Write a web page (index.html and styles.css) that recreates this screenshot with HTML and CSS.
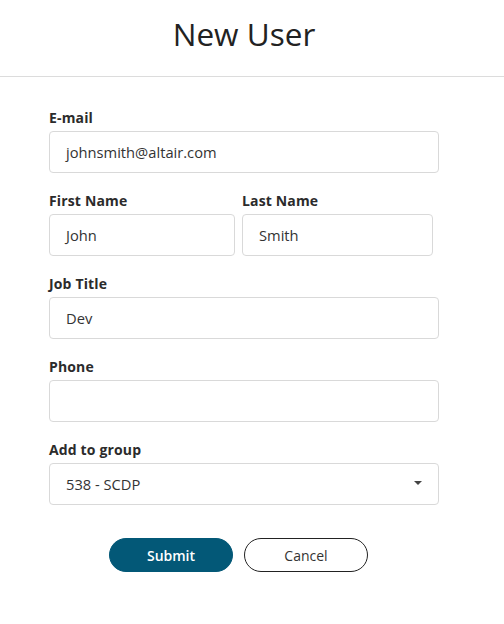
FILE: index.html
```html
<!DOCTYPE html>
<html lang="en">
<head>
<meta charset="utf-8">
<title>New User</title>
<link rel="stylesheet" href="styles.css">
</head>
<body>
<header class="header">
  <h1 class="title">New User</h1>
</header>
<form class="form">
  <div class="field">
    <label class="label">E-mail</label>
    <div class="input">johnsmith@altair.com</div>
  </div>
  <div class="row">
    <div class="field">
      <label class="label">First Name</label>
      <div class="input">John</div>
    </div>
    <div class="field">
      <label class="label">Last Name</label>
      <div class="input">Smith</div>
    </div>
  </div>
  <div class="field">
    <label class="label">Job Title</label>
    <div class="input">Dev</div>
  </div>
  <div class="field">
    <label class="label">Phone</label>
    <div class="input"></div>
  </div>
  <div class="field">
    <label class="label">Add to group</label>
    <div class="input select">
      <span>538 - SCDP</span>
      <span class="caret"></span>
    </div>
  </div>
  <div class="actions">
    <button type="button" class="btn btn-primary">Submit</button>
    <button type="button" class="btn btn-secondary">Cancel</button>
  </div>
</form>
</body>
</html>
```
FILE: styles.css
```css
html, body {
  margin: 0;
  padding: 0;
  background: #fff;
  font-family: "Open Sans", "Noto Sans", sans-serif;
  color: #333;
}
.header {
  padding: 12px 16px 20px 0;
  border-bottom: 1px solid #dcdcdc;
  text-align: center;
}
.title {
  margin: 0;
  font-size: 31.5px;
  line-height: 44px;
  font-weight: 400;
  color: #222;
}
.form {
  width: 390px;
  margin: 0 0 0 49px;
  padding-top: 31px;
  display: flex;
  flex-direction: column;
  gap: 18px;
}
.field {
  display: flex;
  flex-direction: column;
}
.label {
  font-size: 14px;
  line-height: 20px;
  font-weight: 700;
  letter-spacing: 0.15px;
  color: #2b2b2b;
  margin-bottom: 3px;
}
.input {
  box-sizing: border-box;
  height: 42px;
  border: 1px solid #d9d9d9;
  border-radius: 4px;
  padding: 0 16px;
  font-size: 14.7px;
  line-height: 40px;
  color: #333;
  display: flex;
  align-items: center;
}
.row {
  display: grid;
  grid-template-columns: 186px 191px;
  gap: 7px;
}
.select {
  justify-content: space-between;
  padding-right: 16px;
}
.caret {
  width: 0;
  height: 0;
  border-left: 4px solid transparent;
  border-right: 4px solid transparent;
  border-top: 4px solid #444;
  margin-top: -2px;
}
.actions {
  display: flex;
  justify-content: center;
  gap: 11px;
  padding-right: 11px;
  margin-top: 15px;
}
.btn {
  box-sizing: border-box;
  width: 124px;
  height: 34px;
  border-radius: 17px;
  font-family: "Open Sans", "Noto Sans", sans-serif;
  font-size: 14px;
  cursor: pointer;
}
.btn-primary {
  background: #035877;
  border: 1px solid #035877;
  color: #fff;
  font-weight: 600;
}
.btn-secondary {
  background: #fff;
  border: 1px solid #222;
  color: #333;
  font-weight: 400;
}
```
